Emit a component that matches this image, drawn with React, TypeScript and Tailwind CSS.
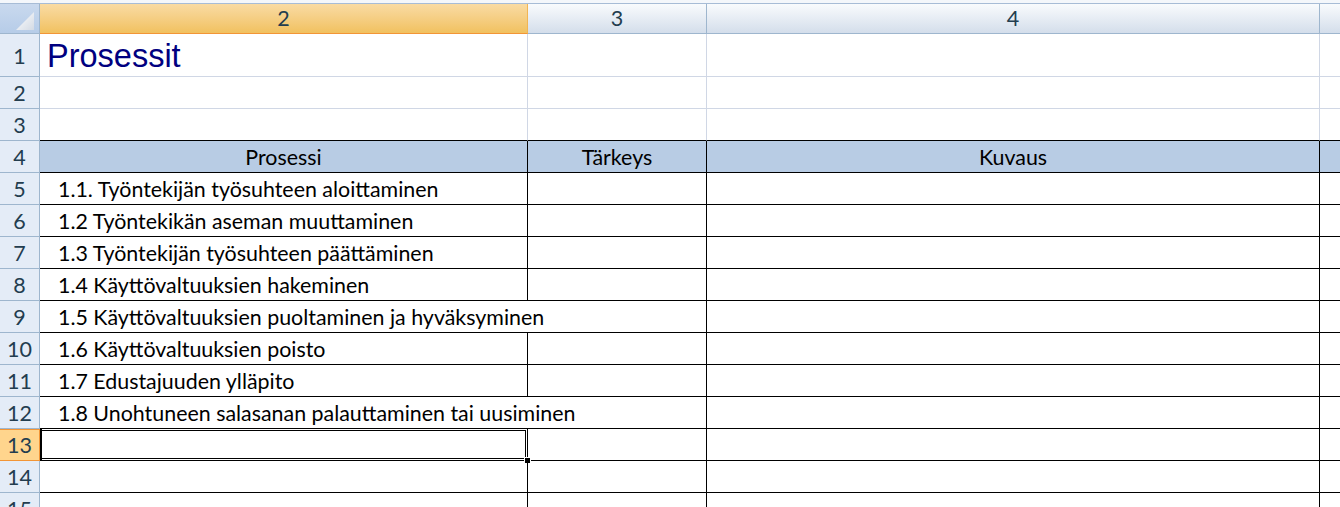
import React from "react";

const cellFont = { fontFamily: "Lato, 'Open Sans', sans-serif" };

type RowDef = {
  n: number;
  tall?: boolean;
  kind: "light" | "black" | "head";
  text?: string;
  overflow?: boolean;
  selected?: boolean;
};

const rows: RowDef[] = [
  { n: 1, tall: true, kind: "light" },
  { n: 2, kind: "light" },
  { n: 3, kind: "light" },
  { n: 4, kind: "head" },
  { n: 5, kind: "black", text: "1.1. Työntekijän työsuhteen aloittaminen" },
  { n: 6, kind: "black", text: "1.2 Työntekikän aseman muuttaminen" },
  { n: 7, kind: "black", text: "1.3 Työntekijän työsuhteen päättäminen" },
  { n: 8, kind: "black", text: "1.4 Käyttövaltuuksien hakeminen" },
  { n: 9, kind: "black", text: "1.5 Käyttövaltuuksien puoltaminen ja hyväksyminen", overflow: true },
  { n: 10, kind: "black", text: "1.6 Käyttövaltuuksien poisto" },
  { n: 11, kind: "black", text: "1.7 Edustajuuden ylläpito" },
  { n: 12, kind: "black", text: "1.8 Unohtuneen salasanan palauttaminen tai uusiminen", overflow: true },
  { n: 13, kind: "black", selected: true },
  { n: 14, kind: "black" },
  { n: 15, kind: "black" },
];

function RowHeader({ n, tall, selected }: { n: number; tall?: boolean; selected?: boolean }) {
  return (
    <div
      className={
        (tall ? "h-[43px] " : "h-[32px] ") +
        (selected
          ? "bg-[#ffd58d] border-r border-b border-[#f29536] shadow-[inset_0_1px_0_#f29536] "
          : "bg-[#e4ecf7] border-r border-b border-[#9eb6ce] ") +
        "w-[40px] shrink-0 flex items-center justify-center text-[21.5px] text-[#233d4f] pt-[2px]"
      }
      style={cellFont}
    >
      {n}
    </div>
  );
}

function Row({ r }: { r: RowDef }) {
  const h = r.tall ? "h-[43px]" : "h-[32px]";
  const isLight = r.kind === "light";
  const bottomBlack = r.n >= 3;
  const bCol = bottomBlack ? "border-b-black" : "border-b-[#d0d7e5]";
  const rCol = isLight ? "border-r-[#d0d7e5]" : "border-r-black";
  const headBg = r.kind === "head" ? "bg-[#b8cce4]" : "";
  return (
    <div className="flex">
      <RowHeader n={r.n} tall={r.tall} selected={r.selected} />
      {/* column 2 */}
      <div
        className={`${h} w-[488px] shrink-0 border-b ${bCol} ${headBg} ${
          r.overflow ? "" : `border-r ${rCol}`
        } relative flex ${r.kind === "head" ? "items-center justify-center" : "items-center"}`}
        style={cellFont}
      >
        {r.n === 1 && (
          <span
            className="pl-[7px] pt-[2px] text-[32.5px] text-[#000080] leading-none"
            style={{ fontFamily: "'Liberation Sans', Arial, sans-serif" }}
          >
            Prosessit
          </span>
        )}
        {r.kind === "head" && <span className="text-[21.4px] text-black pt-[1px]">Prosessi</span>}
        {r.text && (
          <span className="pl-[18px] pt-[2px] text-[21.4px] text-black whitespace-nowrap">{r.text}</span>
        )}
        {r.selected && (
          <div className="absolute -top-px left-0 -right-px -bottom-px border border-black border-l-2 pointer-events-none">
            <div className="absolute top-px left-0 right-px bottom-px border-t border-b border-r border-black" />
            <div className="absolute -right-[4px] -bottom-[4px] w-[7px] h-[7px] bg-black border border-white" />
          </div>
        )}
      </div>
      {/* column 3 */}
      <div
        className={`${h} w-[179px] shrink-0 border-b border-r ${bCol} ${rCol} ${headBg} flex items-center justify-center`}
        style={cellFont}
      >
        {r.kind === "head" && <span className="text-[21.4px] text-black pt-[1px]">Tärkeys</span>}
      </div>
      {/* column 4 */}
      <div
        className={`${h} w-[613px] shrink-0 border-b border-r ${bCol} ${rCol} ${headBg} flex items-center justify-center`}
        style={cellFont}
      >
        {r.kind === "head" && <span className="text-[21.4px] text-black pt-[1px]">Kuvaus</span>}
      </div>
      {/* column 5 */}
      <div className={`${h} flex-1 border-b ${bCol} ${headBg}`} />
    </div>
  );
}

export default function App() {
  return (
    <div className="w-[1340px] h-[507px] overflow-hidden bg-white select-none">
      <div className="h-[3px] bg-[#f4f7fb]" />
      {/* column headers */}
      <div className="flex h-[31px] border-t border-[#a7bcd6]" style={cellFont}>
        <div className="w-[40px] shrink-0 h-[30px] border-r border-b border-[#9eb6ce] bg-gradient-to-b from-[#c9d9ee] to-[#b6cce8] relative">
          <svg className="absolute left-[15px] top-[7px]" width="20" height="20" viewBox="0 0 20 20">
            <defs>
              <linearGradient id="tri" x1="0" y1="0" x2="1" y2="1">
                <stop offset="0" stopColor="#ffffff" />
                <stop offset="1" stopColor="#d3dae4" />
              </linearGradient>
            </defs>
            <polygon points="19,1 19,19 1,19" fill="url(#tri)" />
          </svg>
        </div>
        <div className="w-[488px] shrink-0 h-[30px] border-r border-b border-r-[#f1b554] border-b-[#f29536] bg-gradient-to-b from-[#f9dba3] to-[#f1c15f] flex items-center justify-center text-[21.5px] text-[#233d4f]">
          2
        </div>
        <div className="w-[179px] shrink-0 h-[30px] border-r border-b border-[#9eb6ce] bg-gradient-to-b from-[#f9fbfd] to-[#d4deeb] flex items-center justify-center text-[21.5px] text-[#233d4f]">
          3
        </div>
        <div className="w-[613px] shrink-0 h-[30px] border-r border-b border-[#9eb6ce] bg-gradient-to-b from-[#f9fbfd] to-[#d4deeb] flex items-center justify-center text-[21.5px] text-[#233d4f]">
          4
        </div>
        <div className="flex-1 h-[30px] border-b border-[#9eb6ce] bg-gradient-to-b from-[#f9fbfd] to-[#d4deeb]" />
      </div>
      {rows.map((r) => (
        <Row key={r.n} r={r} />
      ))}
    </div>
  );
}
